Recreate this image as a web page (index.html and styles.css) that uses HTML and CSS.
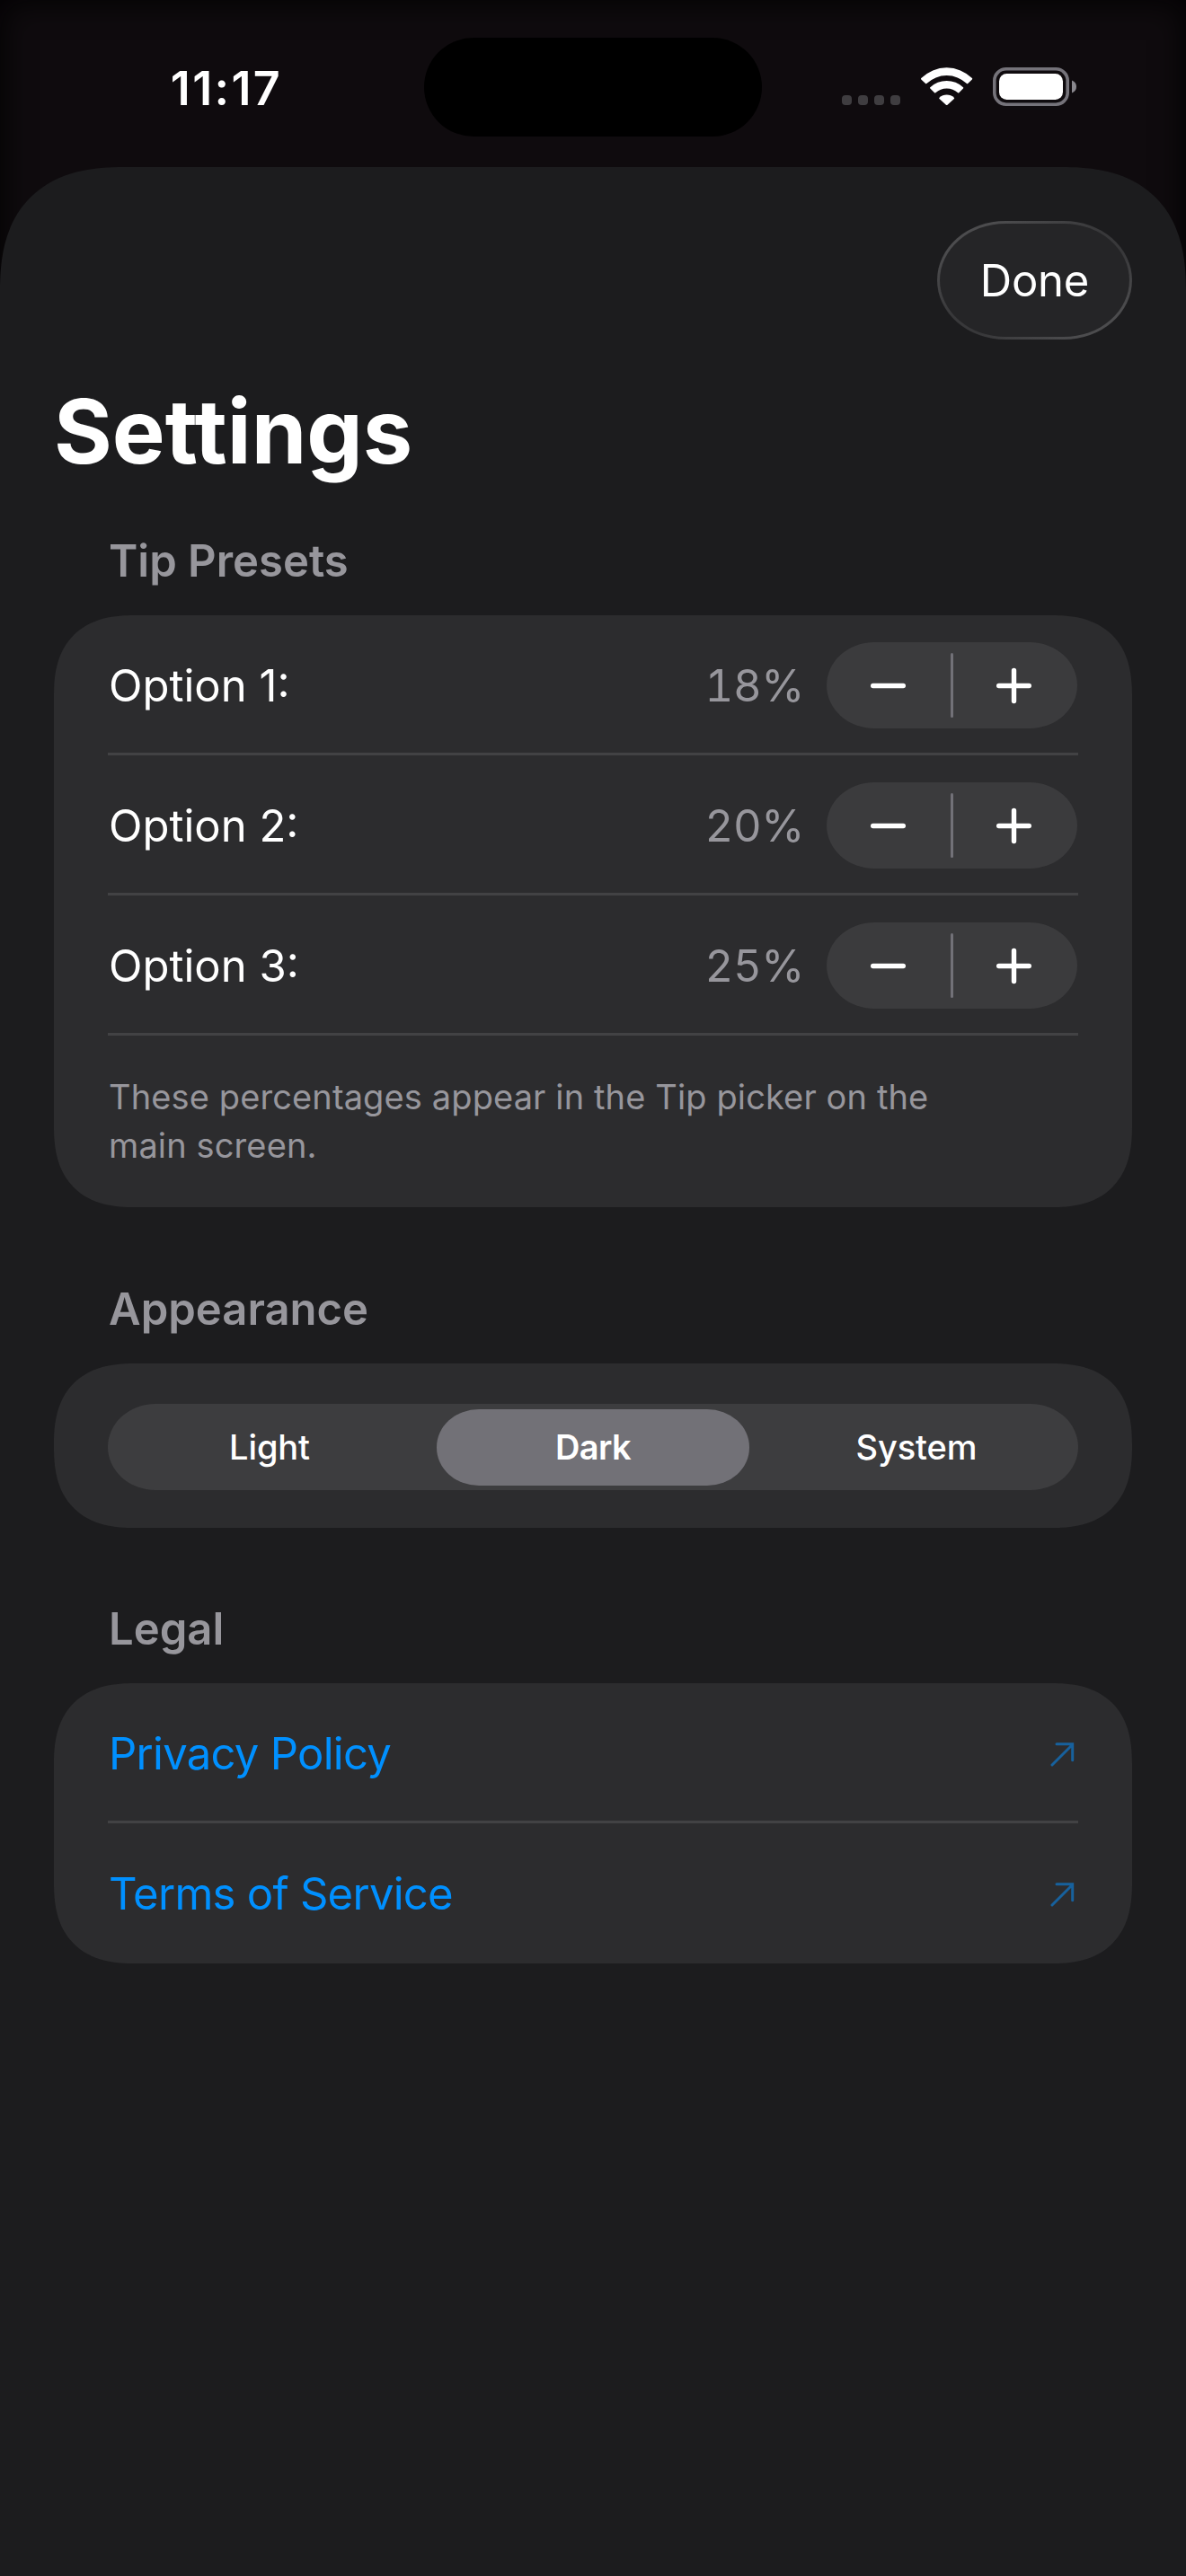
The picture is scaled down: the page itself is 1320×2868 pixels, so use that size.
FILE: index.html
```html
<!DOCTYPE html>
<html lang="en">
<head>
    <meta charset="UTF-8">
    <meta name="viewport" content="width=device-width, initial-scale=1.0">
    <title>Settings</title>
    <link rel="stylesheet" href="styles.css">
</head>
<body>
    <div class="status-bar">
        <div class="time">11:17</div>
        <div class="island"></div>
        <div class="indicators">
            <svg width="66" height="43" viewBox="0 0 66 43" fill="#3f3d40">
                <rect x="0" y="31" width="11" height="11" rx="4"/>
                <rect x="18" y="31" width="11" height="11" rx="4"/>
                <rect x="36" y="31" width="11" height="11" rx="4"/>
                <rect x="54" y="31" width="11" height="11" rx="4"/>
            </svg>
            <svg width="58" height="43" viewBox="0 0 58 43" fill="#fff">
                <path d="M0.3 13.4 Q-0.3 12.7 0.3 12.1 A40 40 0 0 1 56.9 12.1 Q57.5 12.7 56.9 13.4 L52.2 18 Q51.6 18.5 51 18 A32.4 32.4 0 0 0 6.3 18 Q5.7 18.5 5.1 18 Z"/>
                <path d="M10.3 23.5 Q9.7 22.8 10.3 22.3 A26.5 26.5 0 0 1 47 22.3 Q47.6 22.8 47 23.5 L42.3 28.2 Q41.7 28.7 41.1 28.2 A18.6 18.6 0 0 0 16.3 28.2 Q15.7 28.7 15.1 28.2 Z"/>
                <path d="M20.5 35.1 Q19.9 34.5 20.5 33.8 A11.8 11.8 0 0 1 36.9 33.8 Q37.5 34.5 36.9 35.1 L29.5 41.8 Q28.7 42.4 27.9 41.8 Z"/>
            </svg>
            <svg width="93" height="43" viewBox="0 0 93 43">
                <rect x="1.8" y="1.8" width="81.4" height="39.4" rx="13" fill="none" stroke="#75737a" stroke-width="3.6"/>
                <rect x="7" y="7" width="71" height="29" rx="8.5" fill="#fff"/>
                <path d="M88 14.5 Q93 16.5 93 21.5 Q93 26.5 88 28.5 Z" fill="#8a888e"/>
            </svg>
        </div>
    </div>

    <div class="sheet">
        <div class="toolbar">
            <button class="done-btn">Done</button>
        </div>
        <h1>Settings</h1>

        <section>
            <h2>Tip Presets</h2>
            <div class="card">
                <div class="row">
                    <span class="label">Option 1:</span>
                    <span class="percent">18%</span>
                    <div class="stepper">
                        <svg width="279" height="96" viewBox="0 0 279 96">
                            <path class="divider" d="M139.5 13.5V82.5"/>
                            <path d="M51.7 48.5H85.3M191.7 48.5H225.3M208.5 31.5V65.5"/>
                        </svg>
                    </div>
                </div>
                <div class="row">
                    <span class="label">Option 2:</span>
                    <span class="percent">20%</span>
                    <div class="stepper">
                        <svg width="279" height="96" viewBox="0 0 279 96">
                            <path class="divider" d="M139.5 13.5V82.5"/>
                            <path d="M51.7 48.5H85.3M191.7 48.5H225.3M208.5 31.5V65.5"/>
                        </svg>
                    </div>
                </div>
                <div class="row">
                    <span class="label">Option 3:</span>
                    <span class="percent">25%</span>
                    <div class="stepper">
                        <svg width="279" height="96" viewBox="0 0 279 96">
                            <path class="divider" d="M139.5 13.5V82.5"/>
                            <path d="M51.7 48.5H85.3M191.7 48.5H225.3M208.5 31.5V65.5"/>
                        </svg>
                    </div>
                </div>
                <p class="note">These percentages appear in the Tip picker on the<br>main screen.</p>
            </div>
        </section>

        <section>
            <h2>Appearance</h2>
            <div class="card picker-card">
                <div class="picker">
                    <div class="segment">Light</div>
                    <div class="segment selected">Dark</div>
                    <div class="segment">System</div>
                </div>
            </div>
        </section>

        <section>
            <h2>Legal</h2>
            <div class="card">
                <a class="row link" href="#">
                    <span>Privacy Policy</span>
                    <svg width="27" height="27" viewBox="0 0 27 27"><path d="M2 25L24.5 2.5M7 1.8H24.7V19.8"/></svg>
                </a>
                <a class="row link" href="#">
                    <span>Terms of Service</span>
                    <svg width="27" height="27" viewBox="0 0 27 27"><path d="M2 25L24.5 2.5M7 1.8H24.7V19.8"/></svg>
                </a>
            </div>
        </section>
    </div>
</body>
</html>
```
FILE: styles.css
```css
* {
    box-sizing: border-box;
}
body {
    margin: 0;
    height: 2868px;
    display: flex;
    flex-direction: column;
    overflow: hidden;
    background: #0f0b0e;
    box-shadow: inset 0 0 36px #020102;
    font-family: Inter, "Liberation Sans", sans-serif;
    font-size: 49px;
    line-height: 60px;
    color: #fff;
}
svg {
    display: block;
}
h1, h2, p {
    margin: 0;
}

/* status bar */
.status-bar {
    flex: none;
    display: grid;
    grid-template-columns: 472px 376px 472px;
    height: 186px;
    padding-top: 42px;
}
.time {
    padding: 2px 0 0 32px;
    text-align: center;
    font-size: 52px;
    font-weight: 600;
    letter-spacing: 2.36px;
    line-height: 110px;
}
.island {
    height: 110px;
    border-radius: 55px;
    background: #000;
}
.indicators {
    display: flex;
    gap: 22px;
    padding: 33px 0 0 89px;
}

/* sheet */
.sheet {
    flex: 1;
    padding: 60px 60px 0;
    background: #1c1c1e;
    border-radius: 138px 138px 0 0;
    corner-shape: superellipse(1.3);
}
.toolbar {
    display: flex;
    justify-content: flex-end;
}
.done-btn {
    width: 217px;
    height: 132px;
    padding: 2px 0 0;
    border: 3px solid transparent;
    border-radius: 76px / 66px;
    background:
        linear-gradient(#252527, #252527) padding-box,
        linear-gradient(150deg, #4c4c4e 15%, #38383a 45%, #38383a 60%, #4c4c4e 85%) border-box;
    color: #fff;
    font: inherit;
    letter-spacing: -0.2px;
}
h1 {
    margin-top: 42px;
    font-size: 99px;
    font-weight: 700;
    line-height: 120px;
}
section {
    margin-top: 83.5px;
}
h1 + section {
    margin-top: 55px;
}
h2 {
    padding-left: 61px;
    margin-bottom: 30px;
    font-size: 49px;
    font-weight: 600;
    line-height: 60px;
    color: #97969c;
}

/* cards */
.card {
    padding: 0 60px;
    background: #2c2c2e;
    border-radius: 90px;
    corner-shape: superellipse(1.3);
}
.row {
    display: flex;
    align-items: center;
    height: 156px;
    box-shadow: inset 0 -3px #424244;
}
.row:last-child {
    box-shadow: none;
}
.label {
    flex: 1;
    padding: 2px 0 0 1px;
}
.percent {
    padding-top: 2px;
    margin-right: 25px;
    font-variant-numeric: tabular-nums;
    letter-spacing: -0.4px;
    color: #97969c;
}
.stepper {
    width: 279px;
    height: 96px;
    margin-right: 1px;
    border-radius: 53px / 48px;
    background: #3b3b3d;
}
.stepper path {
    fill: none;
    stroke: #fff;
    stroke-width: 5.4;
    stroke-linecap: round;
}
.stepper .divider {
    stroke: #727178;
    stroke-width: 3;
}
.note {
    height: 191px;
    padding: 41px 0 0 1px;
    font-size: 38px;
    line-height: 54px;
    letter-spacing: 0.12px;
    color: #97969c;
}

/* appearance picker */
.picker-card {
    height: 183px;
    padding-top: 45px;
}
.picker {
    display: grid;
    grid-template-columns: repeat(3, 1fr);
    height: 96px;
    padding: 6px 0;
    border-radius: 53px / 48px;
    background: #3d3d3f;
}
.segment {
    margin: 0 6px;
    border-radius: 47px / 42px;
    text-align: center;
    font-size: 38px;
    font-weight: 500;
    line-height: 85px;
    letter-spacing: -0.1px;
}
.segment.selected {
    background: #727177;
    font-weight: 600;
    letter-spacing: -0.6px;
}

/* legal links */
.link {
    justify-content: space-between;
    padding: 2px 4px 0 0;
    color: #0090ff;
    letter-spacing: -0.73px;
    text-decoration: none;
}
.link span {
    padding-left: 1px;
}
.link path {
    fill: none;
    stroke: #17619d;
    stroke-width: 3;
    stroke-linecap: round;
}
```
